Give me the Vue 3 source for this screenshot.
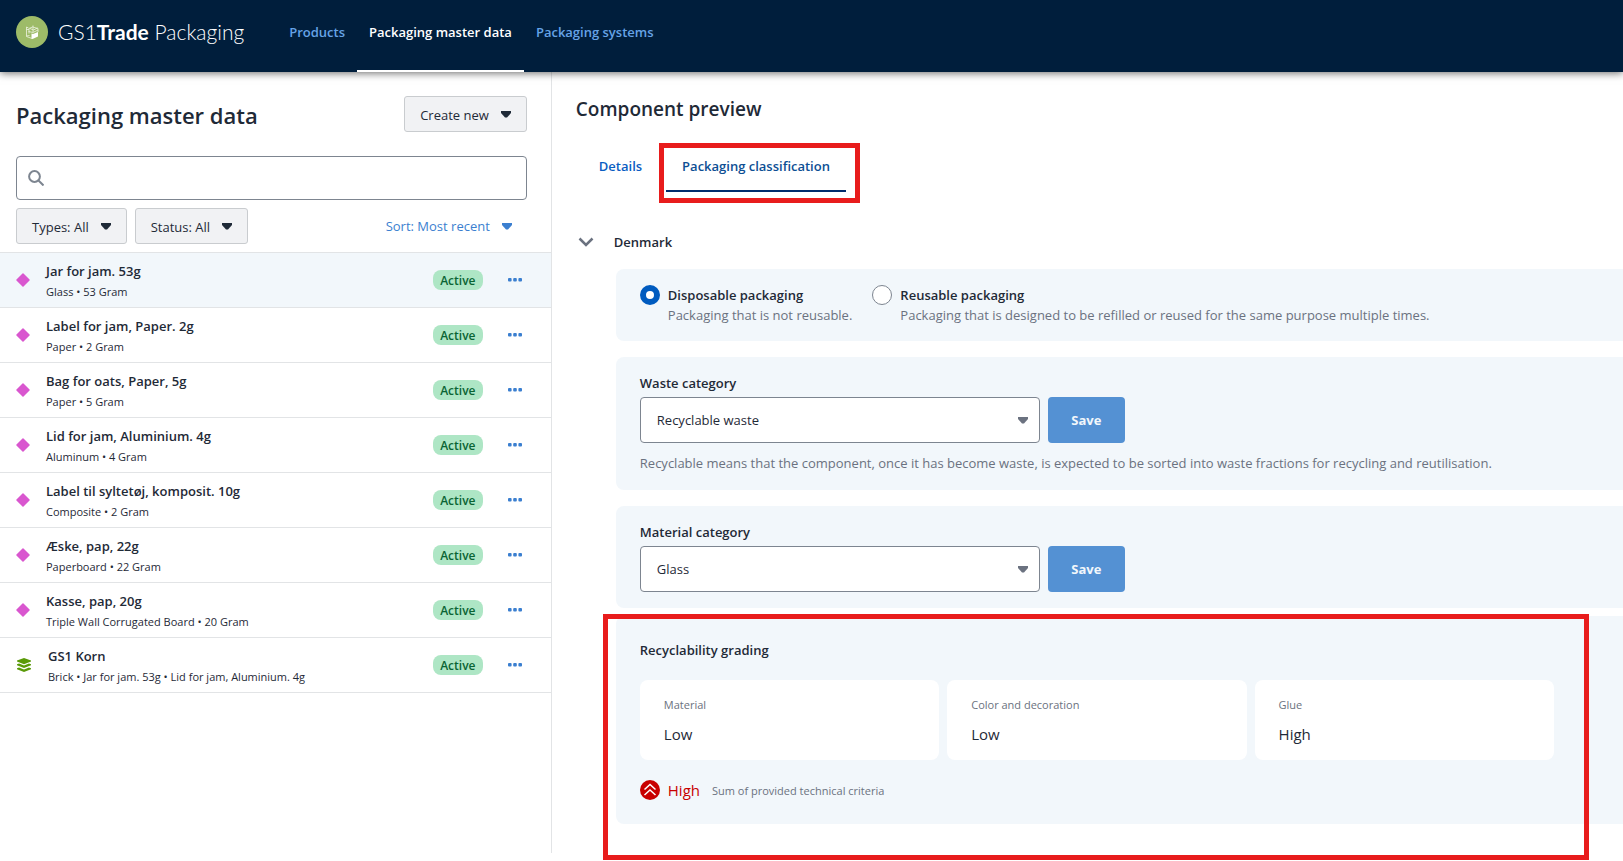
<script setup>
import { ref } from 'vue'

const navItems = [
  { label: 'Products', active: false },
  { label: 'Packaging master data', active: true },
  { label: 'Packaging systems', active: false },
]

const items = [
  { name: 'Jar for jam. 53g', info: 'Glass • 53 Gram', kind: 'component' },
  { name: 'Label for jam, Paper. 2g', info: 'Paper • 2 Gram', kind: 'component' },
  { name: 'Bag for oats, Paper, 5g', info: 'Paper • 5 Gram', kind: 'component' },
  { name: 'Lid for jam, Aluminium. 4g', info: 'Aluminum • 4 Gram', kind: 'component' },
  { name: 'Label til syltetøj, komposit. 10g', info: 'Composite • 2 Gram', kind: 'component' },
  { name: 'Æske, pap, 22g', info: 'Paperboard • 22 Gram', kind: 'component' },
  { name: 'Kasse, pap, 20g', info: 'Triple Wall Corrugated Board • 20 Gram', kind: 'component' },
  { name: 'GS1 Korn', info: 'Brick • Jar for jam. 53g • Lid for jam, Aluminium. 4g', kind: 'system' },
]

const usageOptions = [
  { value: 'disposable', title: 'Disposable packaging', text: 'Packaging that is not reusable.' },
  {
    value: 'reusable',
    title: 'Reusable packaging',
    text: 'Packaging that is designed to be refilled or reused for the same purpose multiple times.',
  },
]

const grades = [
  { label: 'Material', value: 'Low' },
  { label: 'Color and decoration', value: 'Low' },
  { label: 'Glue', value: 'High' },
]

const selected = ref(0)
const search = ref('')
const usage = ref('disposable')
const waste = ref('Recyclable waste')
const material = ref('Glass')
</script>

<template>
  <div class="app">
    <header class="topbar">
      <a class="brand" href="#">
        <svg class="brand-mark" viewBox="0 0 32 32" aria-hidden="true">
          <circle cx="16" cy="16" r="16" fill="#9dbb68" />
          <g fill="none" stroke="#eef3e2" stroke-width=".8">
            <path d="M12.500 12l-2-1v9.500l5.500 2M10.500 13.500h2.500M10.500 20l3-.5M13 12.500v5" />
            <path d="M13 12.500l3.500-1.500 5.500 1.500v3.500M12.500 15.500l4.500 1 5-2.500M17 9.500v6.500M14 12.500l3.500 1.500 4-2" />
          </g>
          <path d="M15.500 17.500l1.500.500 5-2v4.500l-5.500 2.500-1-.500z" fill="#fff" />
        </svg>
        <span class="brand-name">GS1<b>Trade</b> Packaging</span>
      </a>
      <nav class="nav">
        <a v-for="n in navItems" :key="n.label" href="#" class="nav-link" :class="{ active: n.active }">{{ n.label }}</a>
      </nav>
    </header>

    <div class="body">
      <aside class="side">
        <div class="side-head">
          <h1>Packaging master data</h1>
          <button class="btn" type="button">
            Create new
            <svg class="caret" viewBox="0 0 10 7" aria-hidden="true"><path d="M0 0h10v2L6 6.500H4L0 2z" /></svg>
          </button>
        </div>
        <div class="search">
          <svg viewBox="0 0 16 16" aria-hidden="true">
            <circle cx="6.500" cy="6.500" r="5.400" /><path d="M10.500 10.500l5 5" />
          </svg>
          <input v-model="search" type="search" aria-label="Search" />
        </div>
        <div class="filters">
          <button class="btn" type="button">
            Types: All
            <svg class="caret" viewBox="0 0 10 7" aria-hidden="true"><path d="M0 0h10v2L6 6.500H4L0 2z" /></svg>
          </button>
          <button class="btn" type="button">
            Status: All
            <svg class="caret" viewBox="0 0 10 7" aria-hidden="true"><path d="M0 0h10v2L6 6.500H4L0 2z" /></svg>
          </button>
          <button class="sort" type="button">
            Sort: Most recent
            <svg class="caret" viewBox="0 0 10 7" aria-hidden="true"><path d="M0 0h10v2L6 6.500H4L0 2z" /></svg>
          </button>
        </div>
        <ul class="list">
          <li v-for="(item, i) in items" :key="item.name" class="row" :class="{ selected: i === selected }" @click="selected = i">
            <svg v-if="item.kind === 'component'" class="kind" viewBox="0 0 14 14" aria-hidden="true">
              <path d="M7 1l6 6-6 6-6-6z" fill="#d957cf" stroke="#d957cf" stroke-width="1.500" stroke-linejoin="round" />
            </svg>
            <svg v-else class="kind wide" viewBox="0 0 16 16" aria-hidden="true">
              <g fill="#5a9a08">
                <path d="M8 1l7 2.500v1L8 7.200 1 4.500v-1z" />
                <path d="M1 7.200l2-.6 5 1.900 5-1.900 2 .6v1L8 11 1 8.200z" />
                <path d="M1 11.200l2-.6 5 1.900 5-1.900 2 .6v1L8 15l-7-2.800z" />
              </g>
            </svg>
            <div class="row-text">
              <div class="row-name">{{ item.name }}</div>
              <div class="row-info">{{ item.info }}</div>
            </div>
            <span class="badge">Active</span>
            <button class="more" type="button" aria-label="More actions">
              <svg viewBox="0 0 14 4" aria-hidden="true">
                <rect width="3.600" height="3.600" rx="1" /><rect x="5.200" width="3.600" height="3.600" rx="1" /><rect x="10.400" width="3.600" height="3.600" rx="1" />
              </svg>
            </button>
          </li>
        </ul>
      </aside>

      <main class="main">
        <h2>Component preview</h2>
        <div class="tabs" role="tablist">
          <button class="tab" type="button" role="tab" aria-selected="false">Details</button>
          <div class="tab-marked">
            <button class="tab current" type="button" role="tab" aria-selected="true">Packaging classification</button>
          </div>
        </div>

        <button class="country" type="button" aria-expanded="true">
          <svg viewBox="0 0 16 10" aria-hidden="true"><path d="M1.500 1.500L8 8l6.500-6.500" /></svg>
          Denmark
        </button>

        <div class="panels">
          <section class="panel usage">
            <label v-for="o in usageOptions" :key="o.value" class="option">
              <input v-model="usage" type="radio" name="usage" :value="o.value" />
              <span class="option-text">
                <span class="option-title">{{ o.title }}</span>
                <span class="muted">{{ o.text }}</span>
              </span>
            </label>
          </section>

          <section class="panel">
            <label class="label" for="waste">Waste category</label>
            <div class="field">
              <div class="select">
                <select id="waste" v-model="waste"><option>Recyclable waste</option></select>
                <svg class="caret" viewBox="0 0 10 7" aria-hidden="true"><path d="M0 0h10v2L6 6.500H4L0 2z" /></svg>
              </div>
              <button class="save" type="button">Save</button>
            </div>
            <p class="help muted">Recyclable means that the component, once it has become waste, is expected to be sorted into waste fractions for recycling and reutilisation.</p>
          </section>

          <section class="panel">
            <label class="label" for="material">Material category</label>
            <div class="field">
              <div class="select">
                <select id="material" v-model="material"><option>Glass</option></select>
                <svg class="caret" viewBox="0 0 10 7" aria-hidden="true"><path d="M0 0h10v2L6 6.500H4L0 2z" /></svg>
              </div>
              <button class="save" type="button">Save</button>
            </div>
          </section>

          <section class="panel grading">
            <h3 class="label">Recyclability grading</h3>
            <div class="cards">
              <div v-for="g in grades" :key="g.label" class="card">
                <div class="card-label">{{ g.label }}</div>
                <div class="card-value">{{ g.value }}</div>
              </div>
            </div>
            <div class="total">
              <svg viewBox="0 0 20 20" aria-hidden="true">
                <circle cx="10" cy="10" r="10" fill="#c80000" />
                <path d="M4.500 9.500L10 4.500l5.500 5M4.500 15l5.500-5 5.500 5" fill="none" stroke="#fff" stroke-width="1.500" />
              </svg>
              <span class="total-value">High</span>
              <span class="total-note">Sum of provided technical criteria</span>
            </div>
          </section>
        </div>
      </main>
    </div>
  </div>
</template>

<style>
body {
  margin: 0;
  background: #fff;
}
</style>

<style scoped>
.app,
.app button,
.app input,
.app select {
  font-family: 'Segoe UI', 'Open Sans', 'Noto Sans', sans-serif;
  font-size: 13px;
  color: #1f2a37;
}
.app * {
  box-sizing: border-box;
}
h1, h2, h3, p, ul {
  margin: 0;
  padding: 0;
}
svg {
  display: block;
  flex: none;
}
button {
  cursor: pointer;
}

.topbar {
  position: relative;
  display: flex;
  height: 72px;
  padding-left: 16px;
  background: #001e3c;
  box-shadow: 0 1px 8px rgba(0, 0, 0, 0.6);
}
.brand {
  display: flex;
  align-items: center;
  gap: 10px;
  height: 64px;
  margin-right: 33px;
  color: #fff;
  text-decoration: none;
}
.brand-mark {
  width: 32px;
  height: 32px;
}
.brand-name {
  font: 300 21px/24px Lato, sans-serif;
}
.brand-name b {
  font-weight: 700;
}
.nav {
  display: flex;
}
.nav-link {
  padding: 22px 12px 0;
  border-bottom: 2px solid transparent;
  color: #66a3e6;
  font-weight: 600;
  line-height: 20px;
  text-decoration: none;
}
.nav-link.active {
  border-color: #fff;
  color: #fff;
}

.body {
  display: flex;
  align-items: flex-start;
}
.side {
  flex: 0 0 34%;
  min-height: calc(100vh - 80px);
  border-right: 1px solid #e2e4e6;
}
.side-head {
  display: flex;
  align-items: center;
  justify-content: space-between;
  padding: 24px 24px 24px 16px;
}
h1 {
  padding-top: 2px;
  font-size: 22px;
  font-weight: 600;
  line-height: 32px;
}
.btn {
  display: flex;
  align-items: center;
  gap: 12px;
  height: 36px;
  padding: 1px 15px 0;
  border: 1px solid #c9cccf;
  border-radius: 3px;
  background: #f1f2f4;
}
.caret {
  width: 10px;
  height: 7px;
  fill: currentColor;
}
.search {
  display: flex;
  align-items: center;
  gap: 8px;
  height: 44px;
  margin: 0 24px 8px 16px;
  padding: 0 11px;
  border: 1px solid #7d8590;
  border-radius: 4px;
}
.search svg {
  width: 16px;
  height: 16px;
  fill: none;
  stroke: #7d8590;
  stroke-width: 2;
}
.search input {
  flex: 1;
  height: 32px;
  border: 0;
  outline: 0;
  background: none;
}
.filters {
  display: flex;
  gap: 8px;
  padding: 0 24px 8px 16px;
}
.app .sort {
  display: flex;
  align-items: center;
  gap: 12px;
  margin-left: auto;
  padding: 0 15px;
  border: 0;
  background: none;
  color: #3b7fd0;
}
.list {
  border-top: 1px solid #e2e4e6;
  list-style: none;
}
.row {
  display: flex;
  align-items: center;
  height: 55px;
  padding: 0 24px 0 16px;
  border-bottom: 1px solid #e2e4e6;
}
.row.selected {
  background: #f2f7fb;
}
.kind {
  width: 14px;
  height: 14px;
}
.kind.wide {
  width: 16px;
  height: 16px;
}
.row-text {
  flex: 1;
  min-width: 0;
  margin-left: 16px;
  padding-top: 2px;
}
.row-name {
  font-weight: 600;
  line-height: 20px;
}
.row-info {
  font-size: 11px;
  line-height: 21px;
}
.badge {
  width: 50px;
  padding-top: 1px;
  border-radius: 8px;
  background: #aee6c5;
  color: #0a6434;
  font-size: 12px;
  font-weight: 600;
  line-height: 19px;
  text-align: center;
}
.more {
  margin-left: 20px;
  padding: 8px 5px;
  border: 0;
  background: none;
}
.more svg {
  width: 14px;
  height: 4px;
  fill: #3b7fd0;
}

.main {
  flex: 1;
  min-width: 0;
  padding: 21px 0 36px 24px;
}
h2 {
  font-size: 19px;
  font-weight: 600;
  line-height: 32px;
}
.tabs {
  display: flex;
  padding: 18px 0 0 7px;
}
.tab {
  height: 49px;
  padding: 0 16px 1px;
  border: 0;
  border-bottom: 2px solid transparent;
  background: none;
}
.app .tab {
  color: #0a5dc2;
  font-weight: 600;
}
.app .tab.current {
  border-color: #002c6c;
  color: #0d4f94;
}
.tab-marked {
  position: relative;
  margin-left: 8px;
}
.tab-marked::after {
  content: '';
  position: absolute;
  inset: 0 -14px -11px -7px;
  border: 5px solid #e81c1c;
  pointer-events: none;
}
.country {
  display: flex;
  align-items: center;
  gap: 20px;
  margin-top: 40px;
  padding: 0 2px;
  border: 0;
  background: none;
}
.app .country {
  font-weight: 600;
  line-height: 20px;
}
.country svg {
  width: 16px;
  height: 10px;
  fill: none;
  stroke: #6b7280;
  stroke-width: 2.5;
}
.panels {
  display: flex;
  flex-direction: column;
  margin: 17px 0 0 40px;
}
.panel {
  margin-bottom: 16px;
  padding: 16px 24px;
  border-radius: 8px 0 0 8px;
  background: #f2f7fb;
}
.usage {
  display: flex;
  gap: 20px;
}
.option {
  display: flex;
  gap: 8px;
}
.option input {
  flex: none;
  appearance: none;
  width: 20px;
  height: 20px;
  margin: 0;
  border: 1px solid #7d8590;
  border-radius: 50%;
  background: #fff;
}
.option input:checked {
  border: 6px solid #005bbf;
}
.option-text {
  display: flex;
  flex-direction: column;
  line-height: 20px;
}
.option-title,
.label {
  font-size: 13px;
  font-weight: 600;
}
.muted {
  color: #6b7280;
}
.label {
  display: block;
  padding-bottom: 4px;
  line-height: 20px;
}
.field {
  display: flex;
  gap: 8px;
}
.select {
  position: relative;
  flex: 0 1 400px;
}
.select select {
  appearance: none;
  width: 100%;
  height: 46px;
  padding: 0 32px 0 16px;
  border: 1px solid #7d8590;
  border-radius: 4px;
  background: #fff;
}
.select .caret {
  position: absolute;
  top: 20px;
  right: 12px;
  color: #6b7280;
  pointer-events: none;
}
.save {
  width: 77px;
  height: 46px;
  border: 0;
  border-radius: 4px;
  background: #5491d3;
}
.app .save {
  color: #f2f7fb;
  font-weight: 700;
}
.help {
  padding-top: 10px;
  line-height: 21px;
}
.panel:nth-child(3) {
  margin-bottom: 8px;
}
.grading {
  position: relative;
  margin-bottom: 0;
  padding: 24px 69px 24px 24px;
}
.grading::after {
  content: '';
  position: absolute;
  inset: -2px 34px -36px -13px;
  border: 5px solid #e81c1c;
  pointer-events: none;
}
.cards {
  display: grid;
  grid-template-columns: repeat(3, 1fr);
  gap: 8px;
  margin-top: 16px;
}
.card {
  padding: 14px 24px;
  border-radius: 8px;
  background: #fff;
}
.card-label {
  color: #6b7280;
  font-size: 11px;
  line-height: 22px;
}
.card-value {
  padding-top: 6px;
  font-size: 15px;
  line-height: 24px;
}
.total {
  display: flex;
  align-items: center;
  margin-top: 20px;
}
.total svg {
  width: 20px;
  height: 20px;
}
.total-value {
  margin: 0 12px 0 8px;
  color: #c80000;
  font-size: 15px;
  line-height: 20px;
}
.total-note {
  color: #6b7280;
  font-size: 11px;
}
</style>
